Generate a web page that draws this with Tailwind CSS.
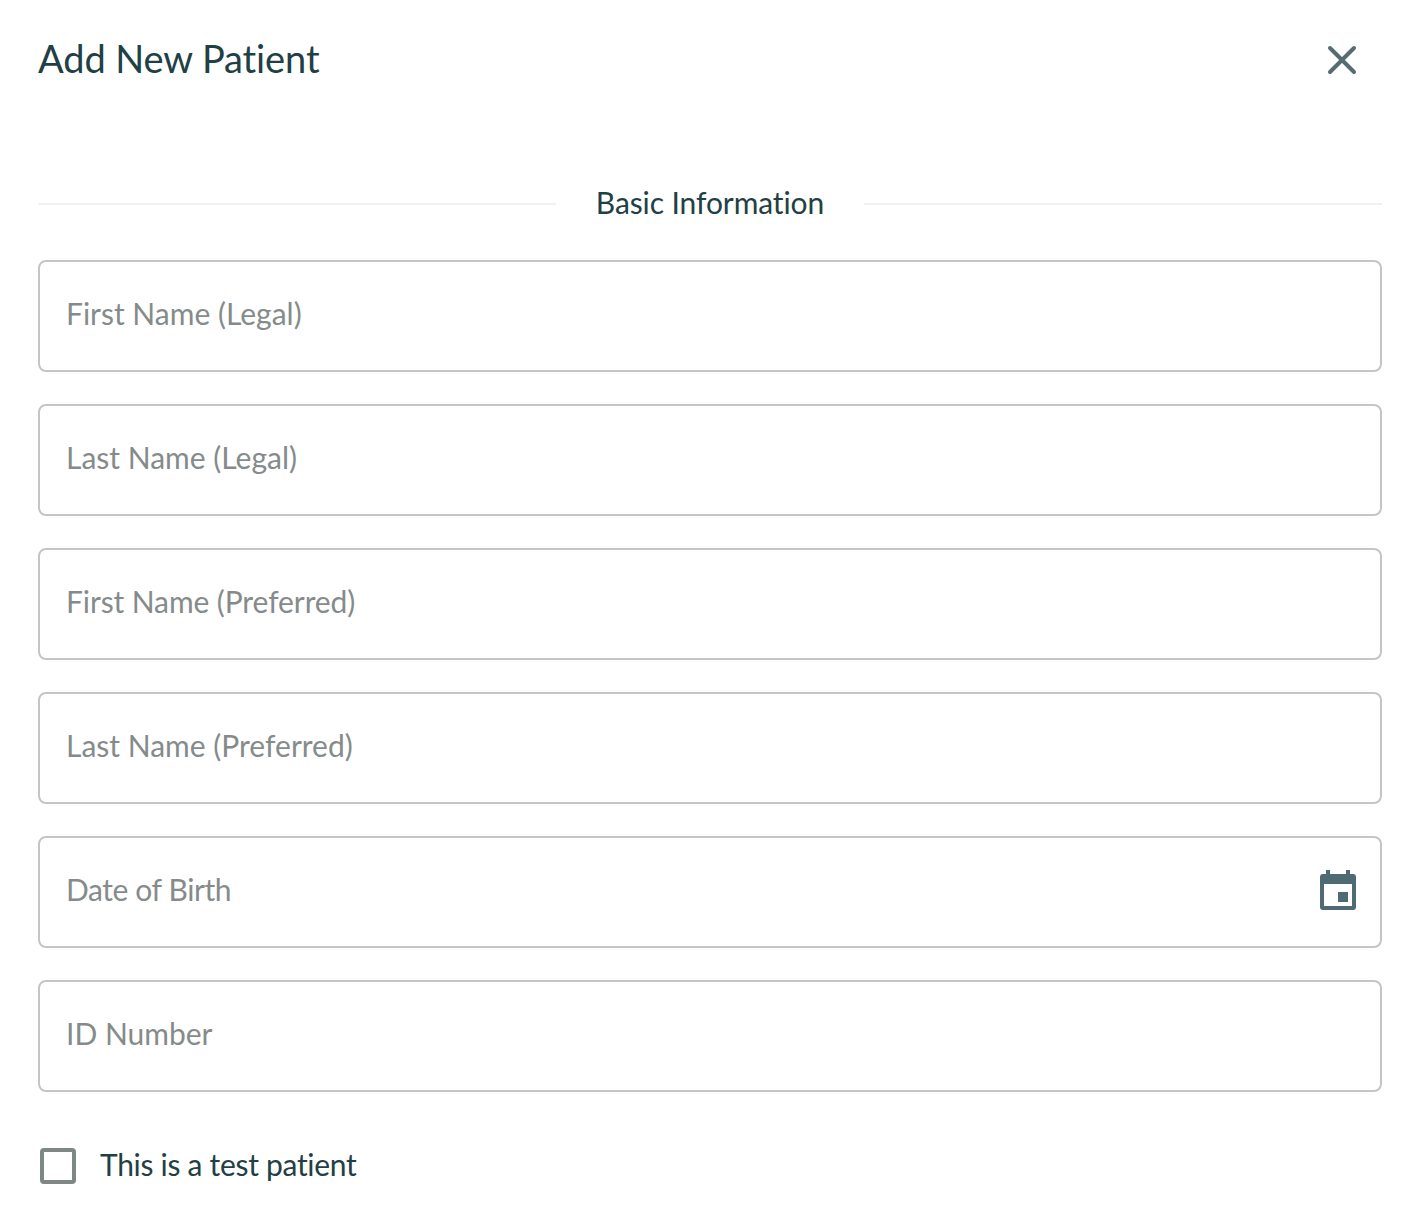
<!DOCTYPE html>
<html lang="en">
<head>
  <meta charset="UTF-8">
  <meta name="viewport" content="width=device-width, initial-scale=1.0">
  <title>Add New Patient</title>
  <script src="https://cdn.jsdelivr.net/npm/@tailwindcss/browser@4"></script>
</head>
<body class="bg-white min-h-screen font-['Lato',sans-serif] text-[#1f4045]">
  <div class="pl-[38px] pr-[32px]">
    <!-- Header -->
    <div class="flex justify-between items-center h-[118px] pb-[2px]">
      <h1 class="text-[38px] leading-[46px] font-normal tracking-[-0.1px]">Add New Patient</h1>
      <button class="mr-[24px] mt-[4px]">
        <svg class="w-[32px] h-[32px] block" viewBox="0 0 32 32" fill="none" stroke="#566c70" stroke-width="4" stroke-linecap="round">
          <path d="M4 4L28 28M28 4L4 28"/>
        </svg>
      </button>
    </div>

    <!-- Section divider -->
    <div class="flex items-center gap-[40px] mt-[64px] h-[44px]">
      <div class="flex-1 h-[2px] bg-[#f0f1f1]"></div>
      <span class="text-[30px] leading-[44px] pb-[5px] tracking-[-0.1px]">Basic Information</span>
      <div class="flex-1 h-[2px] bg-[#f0f1f1]"></div>
    </div>

    <!-- Fields -->
    <div class="flex flex-col gap-[32px] mt-[34px]">
      <label class="flex items-center justify-between h-[112px] px-[26px] border-2 border-[#c4c6c6] rounded-[8px] text-[30px] text-[#858b8b]"><span class="pb-[6px]">First Name (Legal)</span></label>
      <label class="flex items-center justify-between h-[112px] px-[26px] border-2 border-[#c4c6c6] rounded-[8px] text-[30px] text-[#858b8b]"><span class="pb-[6px]">Last Name (Legal)</span></label>
      <label class="flex items-center justify-between h-[112px] px-[26px] border-2 border-[#c4c6c6] rounded-[8px] text-[30px] text-[#858b8b]"><span class="pb-[6px] tracking-[-0.1px]">First Name (Preferred)</span></label>
      <label class="flex items-center justify-between h-[112px] px-[26px] border-2 border-[#c4c6c6] rounded-[8px] text-[30px] text-[#858b8b]"><span class="pb-[6px]">Last Name (Preferred)</span></label>
      <label class="flex items-center justify-between h-[112px] pl-[26px] pr-[24px] border-2 border-[#c4c6c6] rounded-[8px] text-[30px] text-[#858b8b]">
        <span class="pb-[6px] tracking-[-0.4px]">Date of Birth</span>
        <svg class="w-[36px] h-[40px] mb-[4px] block" viewBox="0 0 36 40" fill="#4f6a72">
          <rect x="6" y="0" width="4" height="6"/>
          <rect x="26" y="0" width="4" height="6"/>
          <path fill-rule="evenodd" d="M3 4H33A3 3 0 0 1 36 7V37A3 3 0 0 1 33 40H3A3 3 0 0 1 0 37V7A3 3 0 0 1 3 4ZM4 14V36H32V14Z"/>
          <rect x="18" y="22" width="10" height="10"/>
        </svg>
      </label>
      <label class="flex items-center justify-between h-[112px] px-[26px] border-2 border-[#c4c6c6] rounded-[8px] text-[30px] text-[#858b8b]"><span class="pb-[6px]">ID Number</span></label>
    </div>

    <!-- Test patient -->
    <label class="flex items-center gap-[24px] mt-[56px] ml-[2px]">
      <span class="w-[36px] h-[36px] border-4 border-[#7f8686] rounded-[4px]"></span>
      <span class="text-[30px] leading-[33px] pb-[3px] tracking-[-0.3px]">This is a test patient</span>
    </label>
  </div>
</body>
</html>
